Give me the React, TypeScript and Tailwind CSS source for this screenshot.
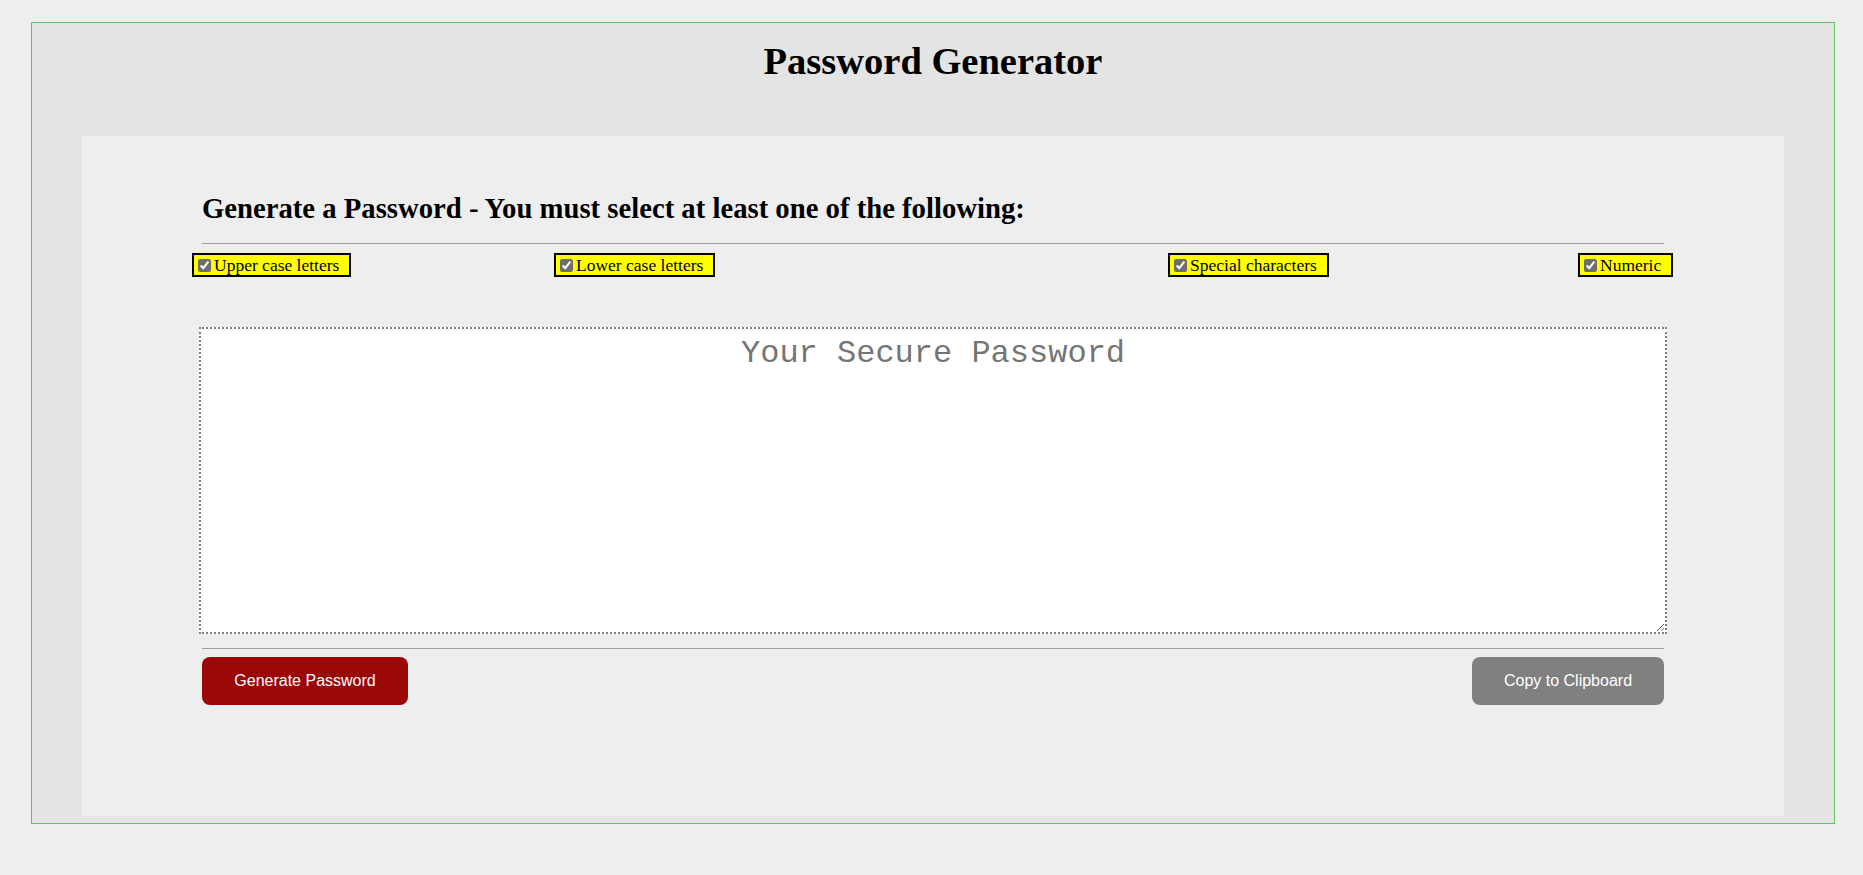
import React from "react";

const options = [
  { label: "Upper case letters" },
  { label: "Lower case letters" },
  { label: "Special characters" },
  { label: "Numeric" },
];

export default function App() {
  return (
    <div className="min-h-screen bg-[#eeeeee] pt-[22px] font-['Liberation_Serif',serif]">
      <div className="ml-[31px] mr-[28px] border border-[#60c360] bg-[#e4e4e4] px-[50px] pt-[16px] pb-[7px]">
        <h1 className="mb-[53px] text-center text-[38.5px] font-bold leading-[44px] text-black">
          Password Generator
        </h1>
        <div className="bg-[#eeeeee] px-[120px] pt-[56px] pb-[111px]">
          <h2 className="text-[28.7px] font-bold leading-[32px] text-black">
            Generate a Password - You must select at least one of the following:
          </h2>
          <hr className="mt-[19px] border-t border-[#a0a0a0]" />
          <div className="-ml-[10px] mt-[9px] grid grid-cols-[362px_614px_410px_auto]">
            {options.map((opt, i) => (
              <div key={i}>
                <label className="inline-flex h-[24px] items-center border-2 border-black bg-[#ffff00] pr-[10px] text-[17.5px] leading-[20px] text-black">
                  <input
                    type="checkbox"
                    defaultChecked
                    className="ml-[4px] mr-[3px] h-[13px] w-[13px] accent-[#6e6e6e]"
                  />
                  {opt.label}
                </label>
              </div>
            ))}
          </div>
          <textarea
            readOnly
            placeholder="Your Secure Password"
            className="-mx-[3px] mt-[48px] block h-[307px] w-[calc(100%+6px)] border-2 border-dotted border-[#808080] bg-white px-2 pt-[7px] text-center font-['Liberation_Mono',monospace] text-[32px] leading-[36px] text-black outline-none placeholder:text-[#757575]"
          />
          <hr className="mt-[14px] border-t border-[#a0a0a0]" />
          <div className="mt-[8px] flex justify-between font-['Liberation_Sans',Arial,sans-serif]">
            <button className="h-[48px] w-[206px] rounded-lg bg-[#9b0707] text-[16px] text-white">
              Generate Password
            </button>
            <button className="h-[48px] w-[192px] rounded-lg bg-[#808080] text-[16px] text-white">
              Copy to Clipboard
            </button>
          </div>
        </div>
      </div>
    </div>
  );
}
